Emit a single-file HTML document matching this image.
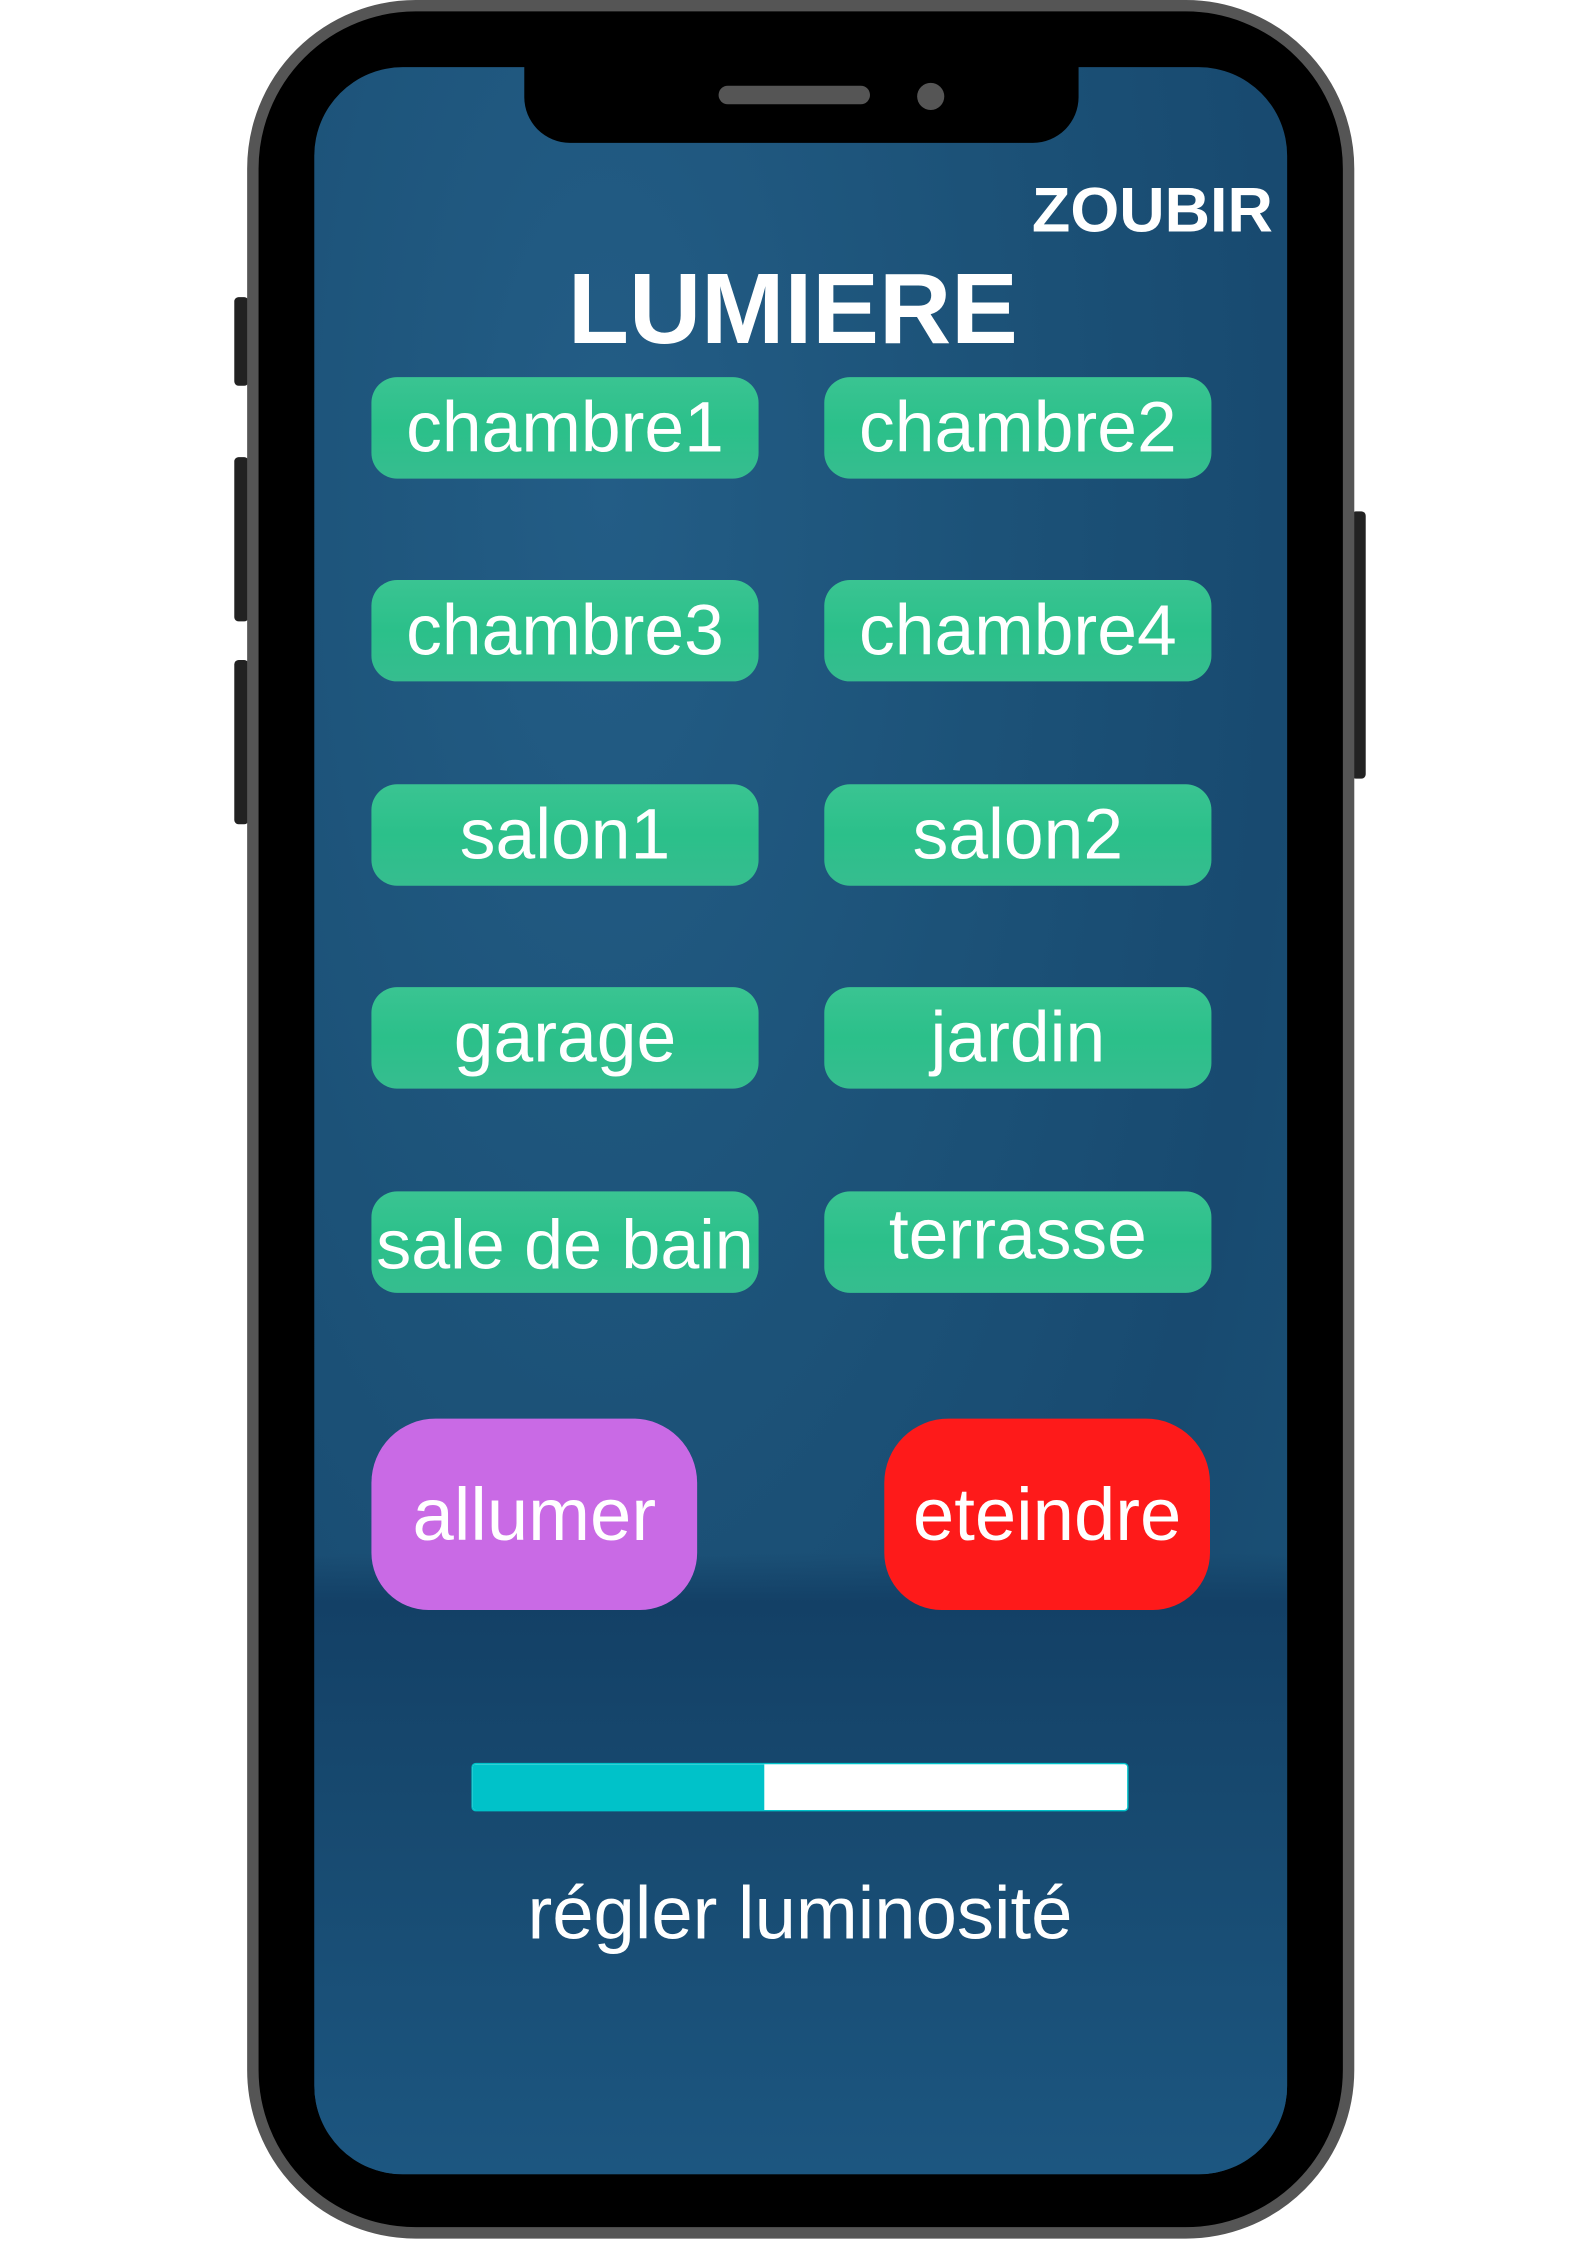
<!DOCTYPE html>
<html><head><meta charset="utf-8"><style>
html,body{margin:0;padding:0;background:#fff;width:1587px;height:2245px;overflow:hidden}
#w{position:absolute;left:0;top:0;width:1111px;height:1571px;transform:scale(1.42857);transform-origin:0 0;font-family:"Liberation Sans",sans-serif}
.a{position:absolute}
.phone{left:173px;top:0;width:759px;height:1551px;border:8px solid #555;border-radius:118px;background:#000}
.btnside{background:#222;border-radius:3px}
.screen{left:220px;top:47px;width:681px;height:1475px;border-radius:62px;overflow:hidden;
background:radial-gradient(ellipse at 30% 20%,#235d86 0%,#1c5278 40%,#184a70 70%,#1b5479 100%)}
.notch{left:367px;top:40px;width:388px;height:60px;background:#000;border-radius:0 0 32px 32px}
.g{position:absolute;width:271px;height:71px;border-radius:18px;background:linear-gradient(#3ac492,#2bc08a 50%,#36bd8f);color:#fff;font-size:50px;text-align:center;line-height:71px;white-space:nowrap}
</style></head><body><div id="w">
<div class="a btnside" style="left:164px;top:208px;width:10px;height:62px"></div>
<div class="a btnside" style="left:164px;top:320px;width:10px;height:115px"></div>
<div class="a btnside" style="left:164px;top:462px;width:10px;height:115px"></div>
<div class="a btnside" style="left:946px;top:358px;width:10px;height:187px"></div>
<div class="a phone"></div>
<div class="a screen">
<div class="a" style="left:0;top:1040px;width:681px;height:435px;background:linear-gradient(rgba(16,60,96,0),#134066 8%,#17496f 40%,#1c5680)"></div>
</div>
<div class="a notch"></div>
<div class="a" style="left:503px;top:60px;width:106px;height:13px;border-radius:7px;background:#555"></div>
<div class="a" style="left:642px;top:58px;width:19px;height:19px;border-radius:50%;background:#555"></div>
<div class="a" style="left:700px;top:123px;width:191px;text-align:right;color:#fff;font-weight:bold;font-size:44px">ZOUBIR</div>
<div class="a" style="left:300px;top:176px;width:510px;text-align:center;color:#fff;font-weight:bold;font-size:70px">LUMIERE</div>
<div class="g" style="left:260px;top:264px">chambre1</div>
<div class="g" style="left:577px;top:264px">chambre2</div>
<div class="g" style="left:260px;top:406px">chambre3</div>
<div class="g" style="left:577px;top:406px">chambre4</div>
<div class="g" style="left:260px;top:549px">salon1</div>
<div class="g" style="left:577px;top:549px">salon2</div>
<div class="g" style="left:260px;top:691px">garage</div>
<div class="g" style="left:577px;top:691px">jardin</div>
<div class="g" style="left:260px;top:834px;line-height:76px;font-size:49px">sale de bain</div>
<div class="g" style="left:577px;top:834px;line-height:60px">terrasse</div>
<div class="a" style="left:260px;top:993px;width:228px;height:134px;border-radius:45px 45px 40px 40px;background:#c96ae5;color:#fff;font-size:52px;text-align:center;line-height:136px">allumer</div>
<div class="a" style="left:619px;top:993px;width:228px;height:134px;border-radius:45px 45px 40px 40px;background:#fe1a1a;color:#fff;font-size:52px;text-align:center;line-height:136px">eteindre</div>
<div class="a" style="left:330px;top:1234px;width:458px;height:32px;border:1px solid #00c2c9;border-radius:3px;background:#fff;overflow:hidden"><div style="width:204px;height:32px;background:#00c2c9"></div></div>
<div class="a" style="left:260px;top:1310px;width:600px;text-align:center;color:#fff;font-size:52px">régler luminosité</div>
</div></body></html>
